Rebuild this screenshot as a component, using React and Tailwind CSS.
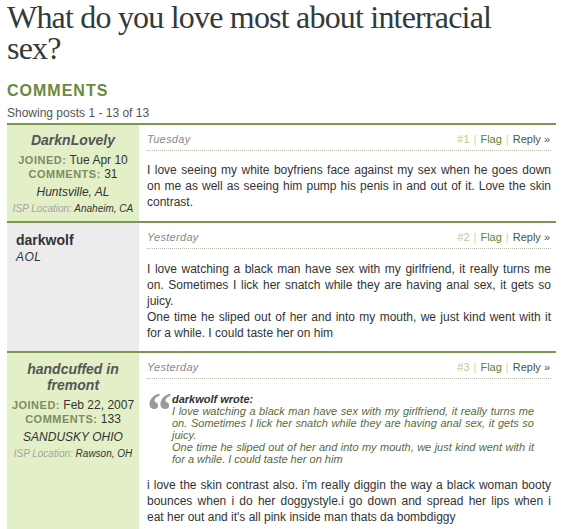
import React from 'react';

const JLine = ({ children, last }) => (
    <span className={last ? 'block whitespace-nowrap' : 'block whitespace-nowrap text-justify [text-align-last:justify]'}>{children}</span>
);

const PostHead = ({ when, num }) => (
    <div className="flex items-center justify-between pt-[7px] pb-[4px] border-b border-dotted border-[#b9bba8] text-[11px] leading-[14px]">
        <span className="italic text-[#8a8a8a] tracking-[0.3px]">{when}</span>
        <span className="pr-[1px]">
            <span className="text-[#b7cc93]">{num}</span>
            <span className="text-[#c9d6b0] px-[4px]">|</span>
            <span className="text-[#5f7f32]">Flag</span>
            <span className="text-[#c9d6b0] px-[4px]">|</span>
            <span className="text-[#4d5540]">Reply »</span>
        </span>
    </div>
);

const Meta = ({ joined, comments, place, isp }) => (
    <div className="text-center">
        <div className="mt-[5px] text-[12px] leading-[14px] text-[#333]">
            <span className="text-[11px] font-bold tracking-[0.5px] text-[#7d8c62]">JOINED:</span> {joined}
        </div>
        <div className="text-[12px] leading-[14px] text-[#333]">
            <span className="text-[11px] font-bold tracking-[0.5px] text-[#7d8c62]">COMMENTS:</span> {comments}
        </div>
        <div className="mt-[4px] text-[12px] leading-[14px] italic text-[#333]">{place}</div>
        <div className="mt-[3px] text-[10px] leading-[13px] italic text-[#333]">
            <span className="text-[#a3a3a3]">ISP Location:</span> {isp}
        </div>
    </div>
);

export default function App() {
    return (
        <div className="w-[566px] h-[529px] overflow-hidden bg-white font-['Liberation_Sans',Arial,sans-serif]">
            <div className="ml-[7px] w-[549px]">
                <h1 className="max-w-[500px] pt-[2px] font-['Liberation_Serif',serif] text-[32px] leading-[31px] tracking-[-0.8px] text-[#333a3a]">
                    What do you love most about interracial sex?
                </h1>

                <h2 className="mt-[17px] text-[16px] leading-[20px] font-bold tracking-[1px] text-[#6b8a3c]">COMMENTS</h2>
                <p className="mt-[4px] text-[12px] leading-[16px] text-[#555]">Showing posts 1 - 13 of 13</p>

                {/* post 1 */}
                <div className="mt-[2px] flex border-t-2 border-[#7a9650]">
                    <div className="w-[132px] shrink-0 bg-[#e3f0c7] pt-[7px] pb-[6px]">
                        <div className="text-center text-[14px] leading-[16px] font-bold italic text-[#555]">DarknLovely</div>
                        <Meta joined="Tue Apr 10" comments="31" place="Huntsville, AL" isp="Anaheim, CA" />
                    </div>
                    <div className="flex-1 pl-[8px] pr-[5px]">
                        <PostHead when="Tuesday" num="#1" />
                        <div className="pt-[11px] pb-[11px] text-[12px] leading-[16px] text-[#333]">
                            <JLine>I love seeing my white boyfriens face against my sex when he goes down</JLine>
                            <JLine>on me as well as seeing him pump his penis in and out of it. Love the skin</JLine>
                            <JLine last>contrast.</JLine>
                        </div>
                    </div>
                </div>

                {/* post 2 */}
                <div className="flex border-t-2 border-[#7a9650]">
                    <div className="w-[132px] shrink-0 bg-[#ececec] pt-[9px] pl-[9px]">
                        <div className="text-[14px] leading-[16px] font-bold text-[#333]">darkwolf</div>
                        <div className="mt-[2px] text-[12px] leading-[14px] italic text-[#333] tracking-[0.5px]">AOL</div>
                    </div>
                    <div className="flex-1 pl-[8px] pr-[5px]">
                        <PostHead when="Yesterday" num="#2" />
                        <div className="pt-[12px] pb-[10px] text-[12px] leading-[16px] text-[#333]">
                            <JLine>I love watching a black man have sex with my girlfriend, it really turns me</JLine>
                            <JLine>on. Sometimes I lick her snatch while they are having anal sex, it gets so</JLine>
                            <JLine last>juicy.</JLine>
                            <JLine>One time he sliped out of her and into my mouth, we just kind went with it</JLine>
                            <JLine last>for a while. I could taste her on him</JLine>
                        </div>
                    </div>
                </div>

                {/* post 3 */}
                <div className="flex border-t-2 border-[#7a9650]">
                    <div className="w-[132px] shrink-0 bg-[#e3f0c7] pt-[8px] pb-[80px]">
                        <div className="text-center text-[14px] leading-[16px] font-bold italic text-[#555]">handcuffed in fremont</div>
                        <Meta joined="Feb 22, 2007" comments="133" place="SANDUSKY OHIO" isp="Rawson, OH" />
                    </div>
                    <div className="flex-1 pl-[8px] pr-[5px]">
                        <PostHead when="Yesterday" num="#3" />
                        <div className="mt-[14px] flex gap-[5px]">
                            <span className="w-[20px] shrink-0 font-['Liberation_Serif',serif] text-[50px] leading-[34px] font-bold text-[#9a9a9a]">“</span>
                            <div className="flex-1 pr-[17px] text-[11px] leading-[12px] italic">
                                <div className="font-bold text-[#333]">darkwolf wrote:</div>
                                <div className="text-[#5a6a3c]">
                                    <JLine>I love watching a black man have sex with my girlfriend, it really turns me</JLine>
                                    <JLine>on. Sometimes I lick her snatch while they are having anal sex, it gets so</JLine>
                                    <JLine last>juicy.</JLine>
                                    <JLine>One time he sliped out of her and into my mouth, we just kind went with it</JLine>
                                    <JLine last>for a while. I could taste her on him</JLine>
                                </div>
                            </div>
                        </div>
                        <div className="pt-[12px] text-[12px] leading-[16px] text-[#333]">
                            <JLine>i love the skin contrast also. i'm really diggin the way a black woman booty</JLine>
                            <JLine>bounces when i do her doggystyle.i go down and spread her lips when i</JLine>
                            <JLine last>eat her out and it's all pink inside man thats da bombdiggy</JLine>
                        </div>
                    </div>
                </div>
            </div>
        </div>
    );
}
